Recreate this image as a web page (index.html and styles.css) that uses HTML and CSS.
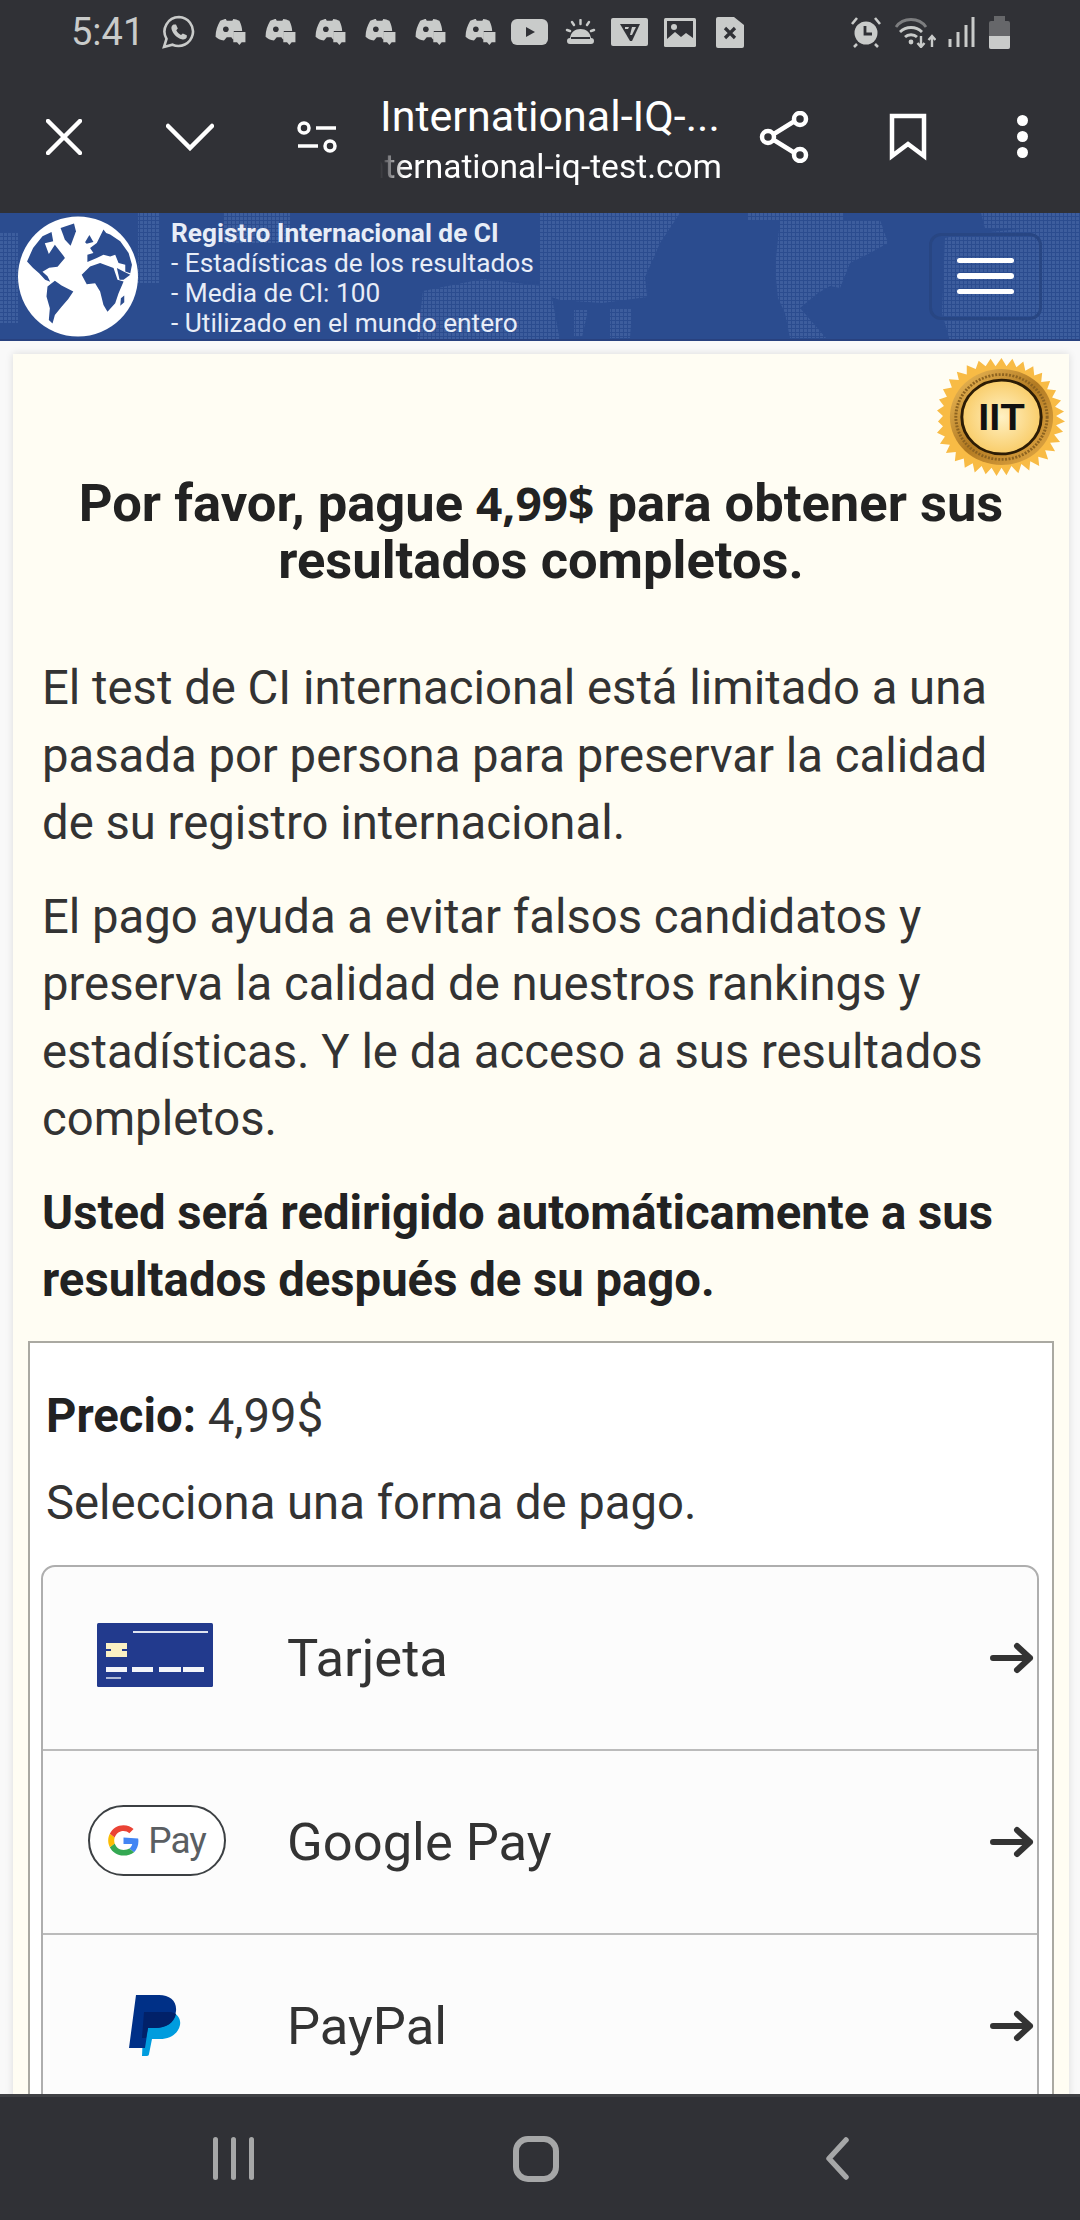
FILE: index.html
```html
<!DOCTYPE html>
<html lang="es">
<head>
    <meta charset="UTF-8">
    <meta name="viewport" content="width=device-width, initial-scale=1.0">
    <title>International-IQ-test.com</title>
    <link rel="stylesheet" href="styles.css">
</head>
<body>

<div class="phone">

    <div class="statusbar">
        <span class="clock">5:41</span>
        <div class="notif-icons">
            <svg class="ico-wa" viewBox="0 0 36 36"><path d="M18 3a14.5 14.5 0 0 0-12.500 21.800L3 33l8.500-2.300A14.500 14.500 0 1 0 18 3z" fill="none" stroke="#c9cbca" stroke-width="2.600"/><path d="M13 10.500l2 0 1.800 4-1.500 1.800c1 2 2.500 3.500 4.700 4.700l1.800-1.600 4 1.900 0 2c-1 2-3 2.600-5 2-5-1.400-9-5.400-10.300-10.300-.5-2 .5-3.800 2-4.500z" fill="#c9cbca"/></svg>
            <svg class="ico-dc" viewBox="0 0 34 30"><path d="M6 3c3-1.500 5-2 6-2l1 2h6l1-2c2 0 4.500 1 6.500 2 2 4 3 8 3 11h-9v9c-1.500-.5-2-1.500-2.500-2.500h-5L10 24C6 23.500 3 22 1 20c0-6 2-12 5-17z" fill="#c9cbca"/><circle cx="12" cy="12" r="3" fill="#303136"/><path d="M20 15h13v11h-4l-2.500 3-2.500-3h-4z" fill="#c9cbca"/></svg>
            <svg class="ico-dc" viewBox="0 0 34 30"><path d="M6 3c3-1.500 5-2 6-2l1 2h6l1-2c2 0 4.500 1 6.500 2 2 4 3 8 3 11h-9v9c-1.500-.5-2-1.500-2.500-2.500h-5L10 24C6 23.500 3 22 1 20c0-6 2-12 5-17z" fill="#c9cbca"/><circle cx="12" cy="12" r="3" fill="#303136"/><path d="M20 15h13v11h-4l-2.500 3-2.500-3h-4z" fill="#c9cbca"/></svg>
            <svg class="ico-dc" viewBox="0 0 34 30"><path d="M6 3c3-1.500 5-2 6-2l1 2h6l1-2c2 0 4.500 1 6.500 2 2 4 3 8 3 11h-9v9c-1.500-.5-2-1.500-2.500-2.500h-5L10 24C6 23.500 3 22 1 20c0-6 2-12 5-17z" fill="#c9cbca"/><circle cx="12" cy="12" r="3" fill="#303136"/><path d="M20 15h13v11h-4l-2.500 3-2.500-3h-4z" fill="#c9cbca"/></svg>
            <svg class="ico-dc" viewBox="0 0 34 30"><path d="M6 3c3-1.500 5-2 6-2l1 2h6l1-2c2 0 4.500 1 6.500 2 2 4 3 8 3 11h-9v9c-1.500-.5-2-1.500-2.500-2.500h-5L10 24C6 23.500 3 22 1 20c0-6 2-12 5-17z" fill="#c9cbca"/><circle cx="12" cy="12" r="3" fill="#303136"/><path d="M20 15h13v11h-4l-2.500 3-2.500-3h-4z" fill="#c9cbca"/></svg>
            <svg class="ico-dc" viewBox="0 0 34 30"><path d="M6 3c3-1.500 5-2 6-2l1 2h6l1-2c2 0 4.500 1 6.500 2 2 4 3 8 3 11h-9v9c-1.500-.5-2-1.500-2.500-2.500h-5L10 24C6 23.500 3 22 1 20c0-6 2-12 5-17z" fill="#c9cbca"/><circle cx="12" cy="12" r="3" fill="#303136"/><path d="M20 15h13v11h-4l-2.500 3-2.500-3h-4z" fill="#c9cbca"/></svg>
            <svg class="ico-dc" viewBox="0 0 34 30"><path d="M6 3c3-1.500 5-2 6-2l1 2h6l1-2c2 0 4.500 1 6.500 2 2 4 3 8 3 11h-9v9c-1.500-.5-2-1.500-2.500-2.500h-5L10 24C6 23.500 3 22 1 20c0-6 2-12 5-17z" fill="#c9cbca"/><circle cx="12" cy="12" r="3" fill="#303136"/><path d="M20 15h13v11h-4l-2.500 3-2.500-3h-4z" fill="#c9cbca"/></svg>
            <svg class="ico-yt" viewBox="0 0 37 26"><rect width="37" height="26" rx="6" fill="#c9cbca"/><path d="M15 8l9 5-9 5z" fill="#303136"/></svg>
            <svg class="ico-sun" viewBox="0 0 31 26"><path d="M5 25a3 3 0 0 1 0-6C6 13 10 10 15.500 10S25 13 26 19a3 3 0 0 1 0 6z" fill="#c9cbca"/><path d="M6 19h19" stroke="#303136" stroke-width="2"/><path d="M15.500 1v4M7 3l2 3M24 3l-2 3M2 11l3 1M29 11l-3 1" stroke="#c9cbca" stroke-width="2.400" stroke-linecap="round"/></svg>
            <svg class="ico-fc" viewBox="0 0 37 28"><rect width="37" height="28" rx="2" fill="#c9cbca"/><path d="M9 6h20l-8 17h-2z" fill="#303136"/><path d="M14 9h4l-1 2h-3zM21 9h4l-4 8h-2z" fill="#c9cbca"/></svg>
            <svg class="ico-img" viewBox="0 0 32 29"><rect width="32" height="29" rx="1.500" fill="#c9cbca"/><rect x="3" y="3" width="26" height="23" fill="#303136"/><path d="M3 21l8-7 6 5 5-4 7 5v6H3z" fill="#c9cbca"/><circle cx="10" cy="9" r="3" fill="#c9cbca"/></svg>
            <svg class="ico-file" viewBox="0 0 28 31"><path d="M2 0h16l10 8v21a2 2 0 0 1-2 2H2a2 2 0 0 1-2-2V2a2 2 0 0 1 2-2z" fill="#c9cbca"/><path d="M9 11l10 10M19 11L9 21" stroke="#303136" stroke-width="3.200"/></svg>
        </div>
        <div class="sys-icons">
            <svg class="ico-alarm" viewBox="0 0 32 32"><circle cx="16" cy="17" r="11.500" fill="#c9cbca"/><path d="M15 10v8h7" fill="none" stroke="#303136" stroke-width="2.800"/><path d="M2 8l5-6M30 8l-5-6M7 28l-3 3M25 28l3 3" stroke="#c9cbca" stroke-width="2.600"/></svg>
            <svg class="ico-wifi" viewBox="0 0 42 32"><path d="M2 11C9 1 25 1 32 11" fill="none" stroke="#7d7e80" stroke-width="2.800"/><path d="M6 16c6-6 16-6 22 0M11 21c3-3 9-3 12 0" fill="none" stroke="#c9cbca" stroke-width="2.800"/><circle cx="17" cy="26" r="2.400" fill="#c9cbca"/><path d="M27 20v11M23.500 27l3.500 4 3.500-4M38 31V20M34.500 24l3.500-4 3.500 4" fill="none" stroke="#c9cbca" stroke-width="2.400"/></svg>
            <svg class="ico-signal" viewBox="0 0 27 30"><path d="M2 22v8M10 15v15M18 8v22M25 0v30" stroke="#c9cbca" stroke-width="3"/></svg>
            <svg class="ico-batt" viewBox="0 0 21 33"><rect x="5" y="0" width="11" height="5" fill="#66676a"/><rect y="5" width="21" height="28" rx="2" fill="#66676a"/><path d="M0 20h21v11a2 2 0 0 1-2 2H2a2 2 0 0 1-2-2z" fill="#c9cbca"/></svg>
        </div>
    </div>

    <div class="toolbar">
        <svg class="tool-x" viewBox="0 0 36 36"><path d="M2 2l32 32M34 2L2 34" stroke="#fff" stroke-width="4.500" stroke-linecap="round"/></svg>
        <svg class="tool-chev" viewBox="0 0 48 28"><path d="M2 3l22 22L46 3" fill="none" stroke="#fff" stroke-width="4.500" stroke-linecap="round"/></svg>
        <svg class="tool-tune" viewBox="0 0 40 32"><circle cx="7" cy="7" r="5" fill="none" stroke="#fff" stroke-width="3.500"/><path d="M19 7h20M1 25h20" stroke="#fff" stroke-width="3.500"/><circle cx="33" cy="25" r="5" fill="none" stroke="#fff" stroke-width="3.500"/></svg>
        <div class="tool-title">
            <div class="tool-name">International-IQ-...</div>
            <div class="tool-url"><span>international-iq-test.com</span></div>
        </div>
        <svg class="tool-share" viewBox="0 0 50 52"><path d="M10 26L39 8M10 26l29 18" stroke="#fff" stroke-width="4.500"/><circle cx="9" cy="26" r="6" fill="#303136" stroke="#fff" stroke-width="4.500"/><circle cx="41" cy="8" r="6" fill="#303136" stroke="#fff" stroke-width="4.500"/><circle cx="41" cy="44" r="6" fill="#303136" stroke="#fff" stroke-width="4.500"/></svg>
        <svg class="tool-mark" viewBox="0 0 38 48"><path d="M3 3h32v40L19 31 3 43z" fill="none" stroke="#fff" stroke-width="4.500"/></svg>
        <div class="tool-dots"><i></i><i></i><i></i></div>
    </div>

    <header class="site-header">
        <svg class="site-map" viewBox="0 0 1080 128">
            <defs>
                <pattern id="dots" width="4" height="4" patternUnits="userSpaceOnUse"><rect width="3" height="3" fill="#5b7bb6"/></pattern>
            </defs>
            <g fill="url(#dots)" opacity="0.38">
                <path d="M0 20h18v90H0zM138 0h22v70h-22zM223 0h67v30h-67z"/>
                <path d="M417 128l6-50 60-12 67 8 10 54z"/>
                <path d="M540 0h140l-20 30-6 14-9 20 2 20-45 6-42-3-20-7z"/>
                <path d="M574 97h14l-6 27h-8zM610 95h22l-2 30h-20z"/>
                <path d="M748 0h95v8h-95z"/>
                <path d="M780 7h100l8 23-18 10-20 10-10 25-10-2-12 7-18 15 26 30h-36l-5-25-7-15-3-30z"/>
                <path d="M981 0h99v15h-95z"/>
                <path d="M945 25l15-3 70-7h50v113H950l-8-28z"/>
            </g>
        </svg>
        <svg class="site-globe" viewBox="55 15 358 360">
            <circle cx="234" cy="195" r="179" fill="#fff"/>
            <g fill="#2b4c8f">
                <path d="M82 150l18-40 28-35 27-13 5 28-25 6 12 32 18-28 25 32 5 8-22 26-25 3-20 12 15 13 8 17-15-6-18-20-18-15z"/>
                <path d="M182 50l40-13 6 23-16 43-17-18z"/>
                <path d="M143 225l22-17 20 14 35 18-15 22-20 23-20 25-7 25-11-10 3-35-10-35z"/>
                <path d="M255 93l13-22 12 21-20 5z"/>
                <path d="M262 130l18-5-10-15 20-15 20-40 8 10 12 5 30 20 25 35 10 35-5 25-15-5v-20l-20-5-10-25-15 5-20-5-20 10-28 12z"/>
                <path d="M245 190l25-25 30-10 40 15 12 35 18 5-15 35-10 30-23 25-12-20-10-40-15-25-25 3z"/>
                <path d="M362 260l10-8v20l-12 10z"/>
                <path d="M350 170l20 10 20 10-20 15h-12z"/>
            </g>
        </svg>
        <div class="site-text">
            <strong>Registro Internacional de CI</strong>
            <span>- Estadísticas de los resultados</span>
            <span>- Media de CI: 100</span>
            <span>- Utilizado en el mundo entero</span>
        </div>
        <button class="menu-btn"><i></i><i></i><i></i></button>
    </header>

    <main class="page">
        <section class="card">
            <svg class="seal" viewBox="0 0 130 130" preserveAspectRatio="none">
                <defs>
                    <radialGradient id="sealIn" cx="50%" cy="50%" r="50%">
                        <stop offset="0" stop-color="#fff1c4"/>
                        <stop offset="1" stop-color="#f9cd6a"/>
                    </radialGradient>
                    <linearGradient id="sealRim" x1="0" y1="0" x2="1" y2="1">
                        <stop offset="0" stop-color="#f1bf5c"/>
                        <stop offset="0.5" stop-color="#b27a22"/>
                        <stop offset="1" stop-color="#e7ad48"/>
                    </linearGradient>
                </defs>
                <polygon fill="#f8bb45" points="65,1 70,10 76,2 80,11 87,5 89,15 97,10 98,20 106,17 105,27 114,26 111,35 120,36 116,44 125,47 119,54 128,59 120,64 129,70 120,74 127,81 118,84 124,92 114,93 119,102 109,101 112,111 102,108 103,118 94,113 93,123 85,116 82,126 75,118 70,128 65,120 60,129 55,120 49,127 45,118 38,125 36,115 28,120 27,110 18,113 19,103 9,104 13,95 3,94 8,86 0,82 6,75 1,70 6,64 0,58 7,53 2,46 10,43 6,35 15,33 12,24 22,25 20,16 30,19 30,9 39,13 42,4 49,10 54,2 59,10"/>
                <circle cx="65" cy="65" r="52" fill="url(#sealRim)"/>
                <circle cx="65" cy="65" r="46" fill="none" stroke="#8d6320" stroke-width="3" stroke-dasharray="2 1.500"/>
                <circle cx="65" cy="65" r="40" fill="url(#sealIn)" stroke="#2c1c05" stroke-width="3"/>
                <text x="65" y="79" text-anchor="middle" class="seal-text">IIT</text>
            </svg>
            <h1>Por favor, pague <span class="price-alt">4,99$</span> para obtener sus resultados completos.</h1>
            <p>El test de CI internacional está limitado a una pasada por persona para preservar la calidad de su registro internacional.</p>
            <p>El pago ayuda a evitar falsos candidatos y preserva la calidad de nuestros rankings y estadísticas. Y le da acceso a sus resultados completos.</p>
            <p class="bold">Usted será redirigido automáticamente a sus resultados después de su pago.</p>

            <div class="pay-box">
                <p class="pay-price"><b>Precio:</b> 4,99$</p>
                <p class="pay-pick">Selecciona una forma de pago.</p>
                <div class="pay-list">
                    <a class="pay-row">
                        <span class="pay-logo">
                            <svg class="logo-card" viewBox="0 0 116 64">
                                <rect width="116" height="64" rx="1.500" fill="#223a8d"/>
                                <path d="M36 9h75" stroke="#dfe4f0" stroke-width="1.800"/>
                                <path d="M9 20h21v14H9z" fill="#fbf1c4"/>
                                <path d="M9 26h5v2H9zM25 26h5v2h-5z" fill="#223a8d"/>
                                <path d="M9 44h21v5H9zM35 44h21v5H35zM62 44h22v5H62zM86 44h21v5H86z" fill="#f4f5f9"/>
                                <path d="M9 55h15" stroke="#dfe4f0" stroke-width="1.500"/>
                            </svg>
                        </span>
                        <span class="pay-name">Tarjeta</span>
                        <svg class="pay-arrow" viewBox="0 0 44 32"><path d="M3 16h37M27 4l13 12-13 12" fill="none" stroke="#333" stroke-width="6" stroke-linecap="round" stroke-linejoin="round"/></svg>
                    </a>
                    <a class="pay-row">
                        <span class="pay-logo">
                            <span class="logo-gpay">
                                <svg class="g-mark" viewBox="0 0 32 32">
                                    <path d="M16 13v6.500h9c-.4 2-1.500 3.600-3 4.700l4.900 3.800c2.900-2.700 4.500-6.600 4.500-11.200 0-1-.1-2-.3-2.800z" fill="#4285f4"/>
                                    <path d="M6.900 19l-1.100.9-3.900 3C4.400 28 9.800 31.500 16 31.500c4.300 0 7.900-1.400 10.900-3.500L22 24.200c-1.400.9-3.100 1.500-6 1.500-4.200 0-7.800-2.800-9.100-6.700z" fill="#34a853"/>
                                    <path d="M1.900 9.100C.8 11.200.2 13.500.2 16s.6 4.800 1.700 6.900l5-3.900c-.3-.9-.5-1.900-.5-3s.2-2.100.5-3z" fill="#fbbc05"/>
                                    <path d="M16 6.300c2.300 0 4.400.8 6 2.300l4.400-4.400C23.800 1.800 20.200.3 16 .3 9.800.3 4.400 3.900 1.900 9.100L6.900 13C8.200 9.100 11.800 6.300 16 6.300z" fill="#ea4335"/>
                                </svg>
                                <span>Pay</span>
                            </span>
                        </span>
                        <span class="pay-name">Google Pay</span>
                        <svg class="pay-arrow" viewBox="0 0 44 32"><path d="M3 16h37M27 4l13 12-13 12" fill="none" stroke="#333" stroke-width="6" stroke-linecap="round" stroke-linejoin="round"/></svg>
                    </a>
                    <a class="pay-row">
                        <span class="pay-logo">
                            <svg class="logo-pp" viewBox="0 0 52 61">
                                <path d="M15 17H42C49 19 52 24 51 30C49 39 41 44 31 44H23L20 59C20 60 19 61 18 61H13z" fill="#009cde"/>
                                <path d="M7 0H30C41 0 48 6 47 16C46 27 37 33 26 33H19L16 53H0z" fill="#003087"/>
                                <path d="M15 17H42C44 17.500 46 18.500 47 19C45 28 37 33 26 33H19L17 43H13z" fill="#012169"/>
                            </svg>
                        </span>
                        <span class="pay-name">PayPal</span>
                        <svg class="pay-arrow" viewBox="0 0 44 32"><path d="M3 16h37M27 4l13 12-13 12" fill="none" stroke="#333" stroke-width="6" stroke-linecap="round" stroke-linejoin="round"/></svg>
                    </a>
                </div>
            </div>
        </section>
    </main>

    <nav class="navbar">
        <div class="nav-recent"><i></i><i></i><i></i></div>
        <div class="nav-home"></div>
        <svg class="nav-back" viewBox="0 0 25 43"><path d="M21 3L4 21.500 21 40" fill="none" stroke="#a6a7a8" stroke-width="5.500" stroke-linecap="round" stroke-linejoin="round"/></svg>
    </nav>

</div>

</body>
</html>
```

FILE: styles.css
```css
html, body {
    margin: 0;
    padding: 0;
}
body {
    width: 1080px;
    height: 2220px;
    overflow: hidden;
    font-family: Roboto, "Liberation Sans", sans-serif;
    color: #222;
}
.phone {
    display: flex;
    flex-direction: column;
    width: 1080px;
    height: 2220px;
    background-color: #f9f9f9;
}

/* android status bar */
.statusbar {
    display: flex;
    align-items: center;
    height: 60px;
    flex: none;
    padding: 4px 70px 0 71px;
    box-sizing: border-box;
    background-color: #303136;
}
.clock {
    font-size: 38px;
    color: #c9cbca;
    width: 90px;
    flex: none;
}
.notif-icons {
    display: flex;
    align-items: center;
}
.notif-icons svg {
    display: block;
    flex: none;
}
.ico-wa { width: 36px; height: 36px; margin-right: 17px; }
.ico-dc { width: 33px; height: 28px; margin-right: 17px; }
.ico-yt { width: 37px; height: 26px; margin-left: -3px; margin-right: 17px; }
.ico-sun { width: 31px; height: 26px; margin-right: 15px; }
.ico-fc { width: 37px; height: 28px; margin-right: 16px; }
.ico-img { width: 32px; height: 29px; margin-right: 20px; }
.ico-file { width: 28px; height: 31px; }
.sys-icons {
    display: flex;
    align-items: center;
    gap: 12px;
    margin-left: auto;
}
.sys-icons svg {
    display: block;
}
.ico-alarm { width: 32px; height: 32px; }
.ico-wifi { width: 42px; height: 32px; }
.ico-signal { width: 27px; height: 30px; margin-right: 2px; }
.ico-batt { width: 21px; height: 33px; }

/* chrome custom tab toolbar */
.toolbar {
    display: flex;
    align-items: center;
    height: 153px;
    flex: none;
    background-color: #303136;
}
.toolbar svg {
    display: block;
    flex: none;
}
.tool-x { width: 36px; height: 36px; margin-left: 46px; }
.tool-chev { width: 48px; height: 28px; margin-left: 84px; }
.tool-tune { width: 40px; height: 32px; margin-left: 83px; }
.tool-title {
    width: 342px;
    margin-left: 43px;
    margin-top: 5px;
    color: #fff;
    overflow: hidden;
    flex: none;
}
.tool-name {
    font-size: 43px;
    line-height: 50px;
    white-space: nowrap;
}
.tool-url {
    font-size: 33.500px;
    line-height: 42px;
    margin-top: 5px;
    display: flex;
    justify-content: flex-end;
    white-space: nowrap;
    -webkit-mask-image: linear-gradient(to right, transparent 0, #000 24px);
    mask-image: linear-gradient(to right, transparent 0, #000 24px);
}
.tool-share { width: 50px; height: 52px; margin-left: 37px; }
.tool-mark { width: 38px; height: 48px; margin-left: 80px; }
.tool-dots {
    display: flex;
    flex-direction: column;
    gap: 5px;
    margin-left: 90px;
}
.tool-dots i {
    display: block;
    width: 11px;
    height: 11px;
    border-radius: 50%;
    background-color: #fff;
}

/* site header */
.site-header {
    display: flex;
    align-items: center;
    position: relative;
    height: 128px;
    flex: none;
    box-sizing: border-box;
    padding: 0 38px 0 18px;
    background-color: #2b4c8f;
    border-bottom: 2px solid #28417f;
    overflow: hidden;
}
.site-map {
    position: absolute;
    left: 0;
    top: 0;
    width: 1080px;
    height: 128px;
}
.site-globe {
    width: 120px;
    height: 121px;
    flex: none;
    position: relative;
}
.site-text {
    display: flex;
    flex-direction: column;
    position: relative;
    margin-left: 33px;
    margin-top: 3px;
    font-size: 26.250px;
    line-height: 30px;
    color: #e8edf7;
}
.site-text strong {
    font-weight: 700;
}
.menu-btn {
    display: flex;
    flex-direction: column;
    align-items: center;
    justify-content: center;
    gap: 10px;
    position: relative;
    width: 113px;
    height: 87px;
    margin-left: auto;
    padding: 0;
    background: none;
    border: 3px solid #284683;
    border-radius: 12px;
}
.menu-btn i {
    display: block;
    width: 57px;
    height: 5.500px;
    border-radius: 3px;
    background-color: #fff;
}

/* page content */
.page {
    flex: 1;
    min-height: 0;
    overflow: hidden;
    padding: 13px 11px 0 13px;
}
.card {
    position: relative;
    padding: 0 15px;
    min-height: 2000px;
    background-color: #fffdf3;
    box-shadow: 0 0 8px rgba(0,0,0,0.12);
}
.seal {
    position: absolute;
    right: 3px;
    top: 3px;
    width: 129px;
    height: 120px;
}
.seal-text {
    font-family: "Liberation Sans", Arial, sans-serif;
    font-size: 40px;
    font-weight: 700;
    fill: #111;
}
.card h1 {
    margin: 0;
    padding: 121px 0 0;
    font-size: 52.500px;
    line-height: 57px;
    font-weight: 700;
    text-align: center;
}
.price-alt {
    font-family: "Open Sans", Roboto, sans-serif;
    font-size: 46px;
    font-weight: 700;
}
.card > p {
    margin: 0 0 26px;
    padding: 0 15px 0 14px;
    font-size: 47.250px;
    line-height: 67.500px;
    color: #333;
}
.card h1 + p {
    margin-top: 66px;
}
.card > p.bold {
    font-weight: 700;
    margin-bottom: 26px;
    color: #222;
}

/* payment box */
.pay-box {
    border: 2px solid #aaa9a2;
    background-color: #fff;
    padding: 40px 13px 0 11px;
    height: 1200px;
}
.pay-price {
    margin: 0;
    padding-left: 5px;
    font-size: 47.250px;
    line-height: 67.500px;
    color: #333;
}
.pay-price b {
    color: #222;
}
.pay-pick {
    margin: 20px 0 27px;
    padding-left: 5px;
    font-size: 47.250px;
    line-height: 67.500px;
    color: #333;
}
.pay-list {
    border: 2px solid #aeaeae;
    border-radius: 14px;
    background-color: #fcfcfc;
    padding-bottom: 300px;
}
.pay-row {
    display: flex;
    align-items: center;
    height: 182px;
    border-bottom: 2px solid #bbb;
}
.pay-row:last-child {
    border-bottom: none;
}
.pay-logo {
    display: flex;
    align-items: center;
    justify-content: center;
    width: 223px;
    flex: none;
}
.logo-card {
    display: block;
    width: 116px;
    height: 64px;
    margin-top: -6px;
}
.logo-gpay {
    display: flex;
    align-items: center;
    justify-content: center;
    gap: 9px;
    box-sizing: border-box;
    width: 138px;
    height: 71px;
    margin-left: 5px;
    margin-top: -3px;
    border: 2.500px solid #3c4043;
    border-radius: 36px;
    background-color: #fff;
    font-size: 37px;
    letter-spacing: -1px;
    color: #5a5e62;
}
.g-mark {
    display: block;
    width: 31px;
    height: 31px;
}
.logo-pp {
    display: block;
    width: 52px;
    height: 61px;
}
.pay-name {
    font-size: 52.500px;
    margin-left: 21px;
    color: #333;
}
.pay-arrow {
    display: block;
    width: 44px;
    height: 32px;
    margin-left: auto;
    margin-right: 3px;
}

/* android nav bar */
.navbar {
    display: flex;
    align-items: center;
    height: 126px;
    flex: none;
    border-top: 3px solid #404145;
    box-sizing: border-box;
    background-color: #303136;
}
.nav-recent {
    display: flex;
    gap: 13px;
    margin-left: 213px;
}
.nav-recent i {
    display: block;
    width: 5px;
    height: 43px;
    border-radius: 3px;
    background-color: #a6a7a8;
}
.nav-home {
    box-sizing: border-box;
    width: 46px;
    height: 46px;
    margin-left: 259px;
    border: 6px solid #a6a7a8;
    border-radius: 15px;
}
.nav-back {
    display: block;
    width: 25px;
    height: 43px;
    margin-left: 266px;
}
```
